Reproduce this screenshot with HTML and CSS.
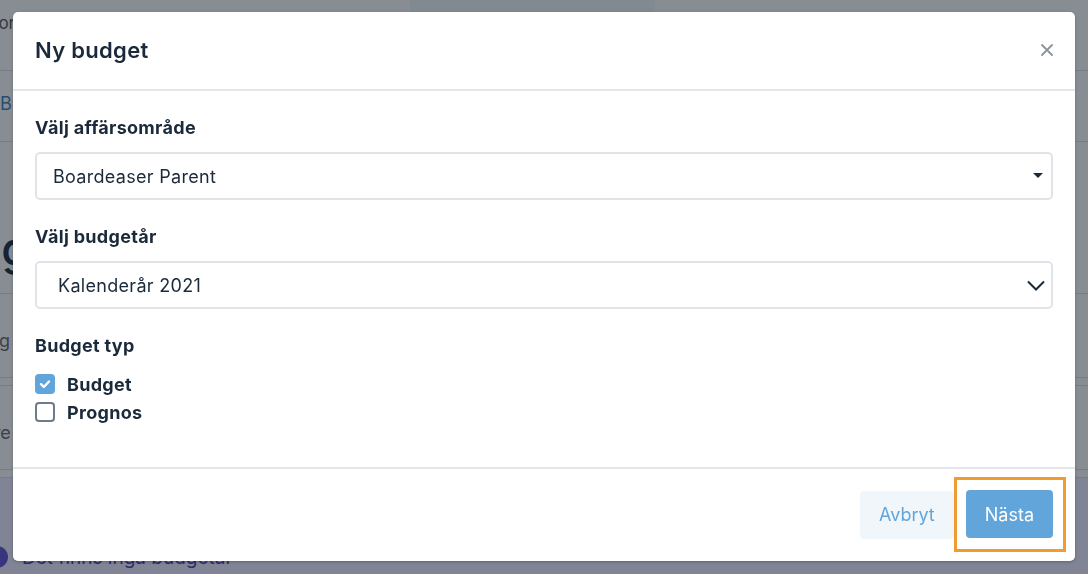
FILE: index.html
```html
<!DOCTYPE html>
<html lang="sv">
<head>
    <meta charset="UTF-8">
    <meta name="viewport" content="width=device-width, initial-scale=1.0">
    <title>Budgetar</title>
    <link rel="stylesheet" href="styles.css">
</head>
<body>
    <div class="page">
        <div class="topnav">
            <span class="nav-item">Kontor</span>
            <span class="nav-item active"></span>
        </div>
        <div class="crumbs"><a href="#">Bu</a></div>
        <div class="heading">
            <h2>Bg</h2>
        </div>
        <div class="row">dg</div>
        <div class="row-gap"></div>
        <div class="row">tre</div>
        <div class="row-gap"></div>
        <div class="alert">
            <span class="alert-dot"></span>
            <span>Det finns inga budgetar</span>
        </div>
    </div>

    <div class="backdrop">
        <div class="modal">
            <div class="modal-header">
                <h3>Ny budget</h3>
                <button class="close" aria-label="Stäng">
                    <svg width="12" height="12" viewBox="0 0 12 12"><path d="M1 1 L11 11 M11 1 L1 11" stroke="#8c939b" stroke-width="1.8" stroke-linecap="round"/></svg>
                </button>
            </div>

            <div class="modal-body">
                <label class="field-label">Välj affärsområde</label>
                <div class="select select-search">
                    <span>Boardeaser Parent</span>
                    <svg width="10" height="6" viewBox="0 0 10 6"><path d="M0 0 H10 L5 5 Z" fill="#1b2a3a"/></svg>
                </div>

                <label class="field-label">Välj budgetår</label>
                <div class="select select-native">
                    <span>Kalenderår 2021</span>
                    <svg width="18" height="11" viewBox="0 0 18 11"><path d="M1 1.5 L9 9.5 L17 1.5" fill="none" stroke="#1b2a3a" stroke-width="2"/></svg>
                </div>

                <label class="field-label">Budget typ</label>
                <div class="check">
                    <span class="box checked">
                        <svg width="12" height="10" viewBox="0 0 12 10"><path d="M2 5.2 L4.8 8 L10 2.5" fill="none" stroke="#fff" stroke-width="2.4" stroke-linecap="round" stroke-linejoin="round"/></svg>
                    </span>
                    <span>Budget</span>
                </div>
                <div class="check">
                    <span class="box"></span>
                    <span>Prognos</span>
                </div>
            </div>

            <div class="modal-footer">
                <button class="btn btn-light">Avbryt</button>
                <span class="focus-ring">
                    <button class="btn btn-primary">Nästa</button>
                </span>
            </div>
        </div>
    </div>
</body>
</html>
```

FILE: styles.css
```css
* {
    box-sizing: border-box;
}
body {
    margin: 0;
    font-family: Inter, "Noto Sans", sans-serif;
    color: #1b2a3a;
    background-color: #fff;
    overflow: hidden;
}

/* page under the dialog */
.page {
    height: 574px;
}
.topnav {
    height: 71px;
    display: flex;
    border-bottom: 1px solid #d9dee4;
    font-size: 17px;
    color: #555;
}
.nav-item {
    padding-top: 13px;
    width: 448px;
    margin-left: -38px;
}
.nav-item.active {
    width: 245px;
    margin-left: 0;
    height: 12px;
    background-color: #eef8f6;
}
.crumbs {
    height: 71px;
    padding-top: 22px;
    border-bottom: 1px solid #d9dee4;
    font-size: 18px;
}
.crumbs a {
    color: #3d7fc0;
    text-decoration: none;
}
.heading {
    height: 152px;
    border-bottom: 1px solid #d9dee4;
}
.heading h2 {
    margin: 0 0 0 -29px;
    padding-top: 78px;
    font-size: 46px;
    font-weight: 500;
}
.row {
    height: 84px;
    padding-top: 36px;
    margin-left: -12px;
    border-bottom: 1px solid #d9dee4;
    font-size: 18px;
    color: #666;
}
.row-gap {
    height: 8px;
    border-bottom: 1px solid #d9dee4;
}
.alert {
    height: 100px;
    padding: 68px 0 0 0;
    margin-left: -14px;
    background-color: #eeecff;
    display: flex;
    gap: 14px;
    font-size: 19px;
    color: #4b3fb0;
}
.alert-dot {
    width: 22px;
    height: 22px;
    border-radius: 50%;
    background-color: #5b4fd0;
}

/* dialog */
.backdrop {
    position: fixed;
    inset: 0;
    background-color: rgba(17, 27, 41, 0.5);
    padding: 12px 13px;
}
.modal {
    background-color: #fff;
    border-radius: 5px;
    box-shadow: 0 1px 3px rgba(0, 0, 0, 0.25);
    height: 549px;
    display: flex;
    flex-direction: column;
    letter-spacing: 0.3px;
}
.modal-header {
    display: flex;
    align-items: center;
    justify-content: space-between;
    padding: 21px 22px 22px;
    border-bottom: 2px solid #e3e6ea;
}
.modal-header h3 {
    margin: 0;
    font-size: 22px;
    line-height: 34px;
    font-weight: 600;
}
.close {
    border: none;
    background: none;
    padding: 0;
    display: flex;
    cursor: pointer;
}
.modal-body {
    padding: 25px 22px 41px;
    display: flex;
    flex-direction: column;
    border-bottom: 2px solid #e3e6ea;
}
.field-label {
    font-size: 18px;
    font-weight: 700;
    line-height: 24px;
    margin-bottom: 12px;
}
.select {
    height: 48px;
    border: 2px solid #e0e4e8;
    border-radius: 5px;
    display: flex;
    align-items: center;
    justify-content: space-between;
    font-size: 18px;
    margin-bottom: 25px;
}
.select-search {
    padding: 0 8px 0 16px;
}
.select-native {
    padding: 0 6px 0 21px;
}
.check {
    display: flex;
    align-items: center;
    gap: 12px;
    height: 28px;
    font-size: 18px;
    font-weight: 700;
}
.box {
    width: 20px;
    height: 20px;
    border: 2px solid #6d7b8a;
    border-radius: 4px;
    display: flex;
    align-items: center;
    justify-content: center;
}
.box.checked {
    border: none;
    background-color: #62a5da;
}
.modal-footer {
    display: flex;
    justify-content: flex-end;
    align-items: center;
    padding: 8px 9px 9px;
}
.focus-ring {
    display: flex;
    padding: 10px 10px 11px 9px;
    border: 3px solid #f29b33;
}
.btn {
    height: 48px;
    padding: 0 19px;
    border: none;
    border-radius: 4px;
    font-family: inherit;
    font-size: 18px;
    letter-spacing: 0;
    cursor: pointer;
}
.btn-light {
    background-color: #f1f6fb;
    color: #62a5da;
}
.btn-primary {
    background-color: #62a5da;
    color: #fff;
}
```
